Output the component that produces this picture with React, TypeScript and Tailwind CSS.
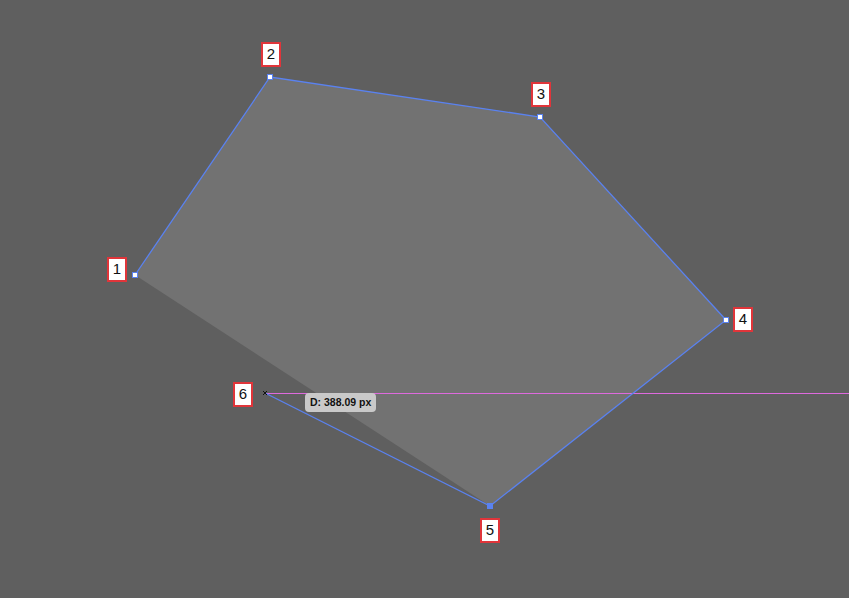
const pts = [
  { n: 1, x: 135, y: 275, lx: 107, ly: 257 },
  { n: 2, x: 270, y: 77, lx: 261, ly: 42 },
  { n: 3, x: 540, y: 117, lx: 531, ly: 82 },
  { n: 4, x: 726, y: 320, lx: 733, ly: 307 },
  { n: 5, x: 490, y: 506, lx: 480, ly: 518 },
];

const Label = ({ n, x, y }: { n: number; x: number; y: number }) => (
  <div
    className="absolute w-[20px] h-[25px] bg-white border-2 border-[#e0353a] flex items-center justify-center text-[15px] text-[#111] font-['Liberation_Sans',sans-serif]"
    style={{ left: x, top: y }}
  >
    {n}
  </div>
);

const App = () => {
  return (
    <div className="relative w-[849px] h-[598px] bg-[#5f5f5f] overflow-hidden">
      <svg width="849" height="598" className="absolute inset-0">
        <polygon points="135,275 270,77 540,117 726,320 490,506" fill="#727272" />
        <line x1="265" y1="393.5" x2="849" y2="393.5" stroke="#de6ade" strokeWidth="1" />
        <polyline
          points="135,275 270,77 540,117 726,320 490,506 265,393"
          fill="none"
          stroke="#5a82f0"
          strokeWidth="1.3"
        />
        {pts.slice(0, 4).map((p) => (
          <rect key={p.n} x={p.x - 2.5} y={p.y - 2.5} width="5" height="5" fill="white" stroke="#5a82f0" strokeWidth="1" />
        ))}
        <rect x="487" y="503" width="6" height="6" fill="#5a82f0" />
        <path d="M263 391 L267 395 M267 391 L263 395" stroke="#111" strokeWidth="1" />
      </svg>
      {pts.map((p) => (
        <Label key={p.n} n={p.n} x={p.lx} y={p.ly} />
      ))}
      <Label n={6} x={233} y={382} />
      <div className="absolute left-[305px] top-[393px] h-[19px] px-[5px] rounded-[4px] bg-[#c9c9c9] flex items-center text-[10.5px] font-bold text-[#111] font-['Liberation_Sans',sans-serif]">
        D: 388.09 px
      </div>
    </div>
  );
};

export default App;
